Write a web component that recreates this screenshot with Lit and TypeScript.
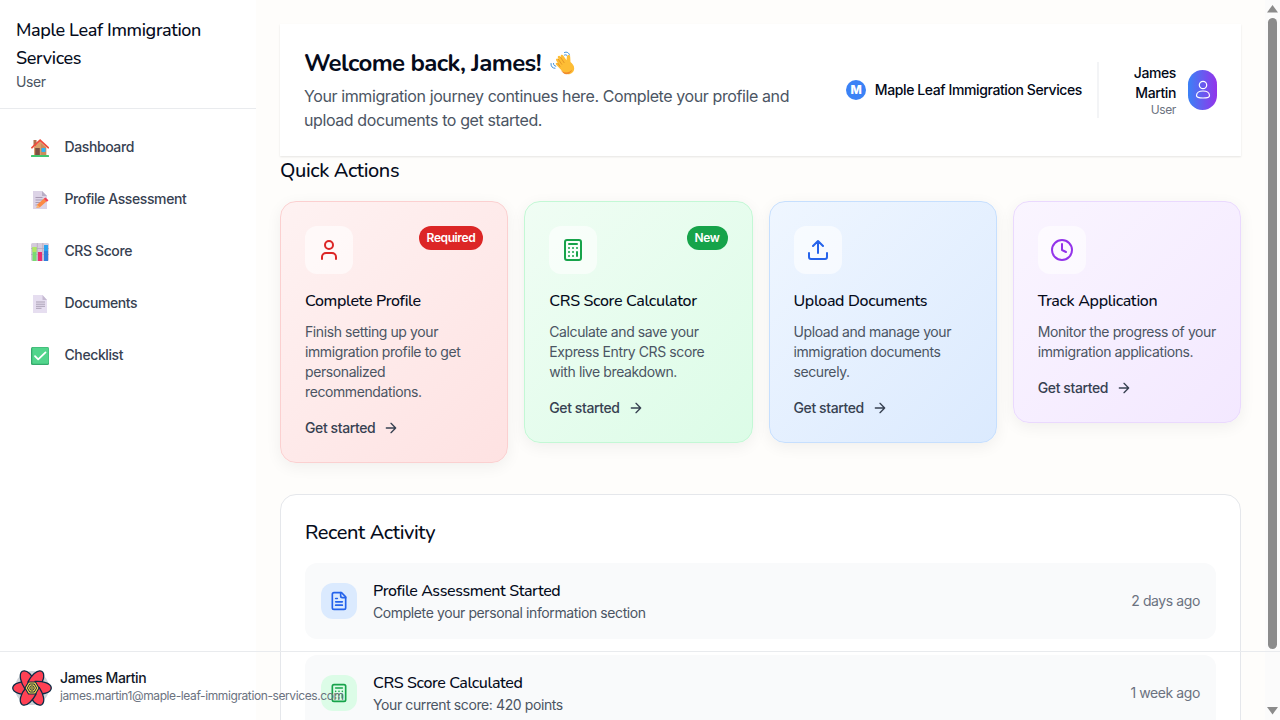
import { LitElement, html, css, svg } from "lit";
import { customElement } from "lit/decorators.js";

const lucide = (body: unknown, size: number) => html`<svg width=${size} height=${size} viewBox="0 0 24 24" fill="none" stroke="currentColor" stroke-width="2" stroke-linecap="round" stroke-linejoin="round">${body}</svg>`;

const icons = {
  user: svg`<path d="M19 21v-2a4 4 0 0 0-4-4H9a4 4 0 0 0-4 4v2"/><circle cx="12" cy="7" r="4"/>`,
  calculator: svg`<rect width="16" height="20" x="4" y="2" rx="2"/><path d="M8 6h8M16 14v4M16 10h.01M12 10h.01M8 10h.01M12 14h.01M8 14h.01M12 18h.01M8 18h.01"/>`,
  upload: svg`<path d="M21 15v4a2 2 0 0 1-2 2H5a2 2 0 0 1-2-2v-4M17 8l-5-5-5 5M12 3v12"/>`,
  clock: svg`<circle cx="12" cy="12" r="10"/><path d="M12 6v6l4 2"/>`,
  file: svg`<path d="M15 2H6a2 2 0 0 0-2 2v16a2 2 0 0 0 2 2h12a2 2 0 0 0 2-2V7Z"/><path d="M14 2v4a2 2 0 0 0 2 2h4M10 9H8M16 13H8M16 17H8"/>`,
  arrow: svg`<path d="M5 12h14M12 5l7 7-7 7"/>`,
};

const emoji = (body: unknown) => html`<svg width="18" height="18" viewBox="0 0 18 18">${body}</svg>`;

const nav = [
  { label: "Dashboard", icon: emoji(svg`
    <rect x="2.5" y="1" width="3" height="6" fill="#b0704f"/>
    <path d="M3 8 9 2.6 15.2 8v8.5H3Z" fill="#d9a06b"/>
    <path d="M10 4.5 15.2 9v7.500H10Z" fill="#c98d5d"/>
    <rect x="4.200" y="9" width="4.600" height="7.500" fill="#7d4f42"/>
    <rect x="10.500" y="9" width="4" height="4" fill="#2fb4f3"/>
    <path d="M1 8.700 9.100 1.300 17.200 8.700" fill="none" stroke="#ee4c3c" stroke-width="1.800" stroke-linecap="round"/>
    <rect x="0" y="16" width="18" height="2" rx=".6" fill="#43c66f"/>`) },
  { label: "Profile Assessment", icon: emoji(svg`
    <path d="M2 0h9l5 5v13H2Z" fill="#dcd3e6"/><path d="M11 0v5h5Z" fill="#b8aec6"/>
    <path d="M4.500 6.500h7M4.500 9h9M4.500 11.500h7M4.500 14h3" stroke="#a99bb4" stroke-width="1"/>
    <path d="m5.500 17 .8-3.500 7-6.200 2.700 2.700-7 6.200Z" fill="#fb8a45"/>
    <path d="m12.800 7.800 1.700-1.300 3 2.700-1.500 1.500Z" fill="#f3405a"/>
    <path d="m5.500 17 .8-3.200 2.500 2.500Z" fill="#f5b97c"/>`) },
  { label: "CRS Score", icon: emoji(svg`
    <rect width="18" height="18" rx="1.500" fill="#d5cbdc"/>
    <path d="M6.300 0v18M11.800 0v18M0 5.500h18M0 11.500h18" stroke="#b5aabd" stroke-width=".8"/>
    <rect x="1.500" y="4" width="4" height="14" fill="#79dc72"/><rect x="1.500" y="4" width="4" height="5" fill="#b2e764"/>
    <rect x="7" y="9" width="4" height="9" fill="#ea2e70"/>
    <rect x="13" y="2" width="4" height="16" fill="#2f7fdc"/><rect x="13" y="2" width="4" height="6" fill="#2ba3ee"/>`) },
  { label: "Documents", icon: emoji(svg`
    <path d="M2 0h9.500l4.500 5v13H2Z" fill="#e6def0"/><path d="M11.500 0v5H16Z" fill="#c6bad2"/>
    <path d="M5 7h9M5 9.200h9M5 11.300h9M5 13.300h5.500" stroke="#aaa0b4" stroke-width="1"/>`) },
  { label: "Checklist", icon: emoji(svg`
    <rect width="18" height="18" rx="1.500" fill="#35a96c"/><rect x="1.300" y=".4" width="16.300" height="16.300" rx="1" fill="#52d58c"/>
    <path d="m4 9.200 3.200 3.200 7.300-7" fill="none" stroke="#fff" stroke-width="1.800" stroke-linecap="round" stroke-linejoin="round"/>`) },
];

const actions = [
  { tone: "red", icon: icons.user, badge: "Required", title: "Complete Profile", text: "Finish setting up your immigration profile to get personalized recommendations." },
  { tone: "green", icon: icons.calculator, badge: "New", title: "CRS Score Calculator", text: "Calculate and save your Express Entry CRS score with live breakdown." },
  { tone: "blue", icon: icons.upload, badge: "", title: "Upload Documents", text: "Upload and manage your immigration documents securely." },
  { tone: "purple", icon: icons.clock, badge: "", title: "Track Application", text: "Monitor the progress of your immigration applications." },
];

const activity = [
  { tone: "blue", icon: icons.file, title: "Profile Assessment Started", text: "Complete your personal information section", when: "2 days ago" },
  { tone: "green", icon: icons.calculator, title: "CRS Score Calculated", text: "Your current score: 420 points", when: "1 week ago" },
];

const wave = html`<svg class="wave" width="25" height="24" viewBox="0 0 25 24">
  <g fill="none" stroke="#3a8fdb" stroke-width="1" stroke-linecap="round">
    <path d="M14.500 1.500c2.500-1 4.500.2 5 2.500M14.500 4c1.500-.6 2.500 0 3 1.500M1 12.500c-.3 2.800 1.300 4.700 4 4.800M3.500 12.500c0 1.500.8 2.500 2.300 2.700"/></g>
  <path d="M8 12.500 6.200 9.500c-.9-1.700 1-2.800 2-1.500l.5.600-.8-1.900c-.7-1.800 1.500-2.700 2.400-1.200l.7 1-.3-1c-.5-1.900 1.800-2.500 2.600-1l3.200 4.700.4-3.600c.3-2.200 3.300-2 3.300.2l.3 5.200c1.800 2 3.700 3 3.700 6.200 0 3.500-2.700 6-6 6-3.500 0-5.500-2-7.500-4.700L6 13.500c-1-1.500 1-2.500 2-1Z" fill="#fdbd35"/>
  <path d="m8.300 8.300 3.500 5M10.700 6.500l3.400 5.200M8 12.500l2 2.800" fill="none" stroke="#df8c22" stroke-width=".8" stroke-linecap="round"/>
  <path d="M10.800 19c2.500 3 8 3.500 11.500-.5-1 3.200-3.500 4.700-5.900 4.700-2.400 0-4-1.700-5.600-4.200Z" fill="#f08b2d"/></svg>`;

const flower = html`<svg width="40" height="40" viewBox="-20 -20 40 40">
  <circle r="17" fill="#cfd3d8"/>
  ${[0, 60, 120, 180, 240, 300].map((a) => svg`<path transform="rotate(${a})" d="M-3 6.500C-10 7-19 5-19.300 0-19-5-10-7-4-5.500Z" fill="#ff4154" stroke="#0b2b45" stroke-width="1.300" stroke-linejoin="round"/>`)}
  <path d="M-7 0-3.500-6h7L7 0 3.500 6h-7Z" fill="#ffd94c" stroke="#0b2b45" stroke-width="1.100"/>
  <path d="M-4.600 0-2.300-4h4.600L4.600 0 2.300 4h-4.600Z" fill="#ffd94c" stroke="#0b2b45"/>
  <circle r="2.200" fill="#ffd94c" stroke="#0b2b45"/><circle r=".8" fill="#0b2b45"/></svg>`;

@customElement("app-root")
export class AppRoot extends LitElement {
  static styles = css`
    :host { display: block; height: 720px; overflow: hidden; position: relative; background: #fefdfb; color: #020817;
      font: 400 14px/20px Inter, sans-serif; letter-spacing: -0.4px; }
    * { box-sizing: border-box; }
    h1, h2, h3, p { margin: 0; }
    svg { display: block; flex: none; }
    .heading { font-family: Nunito, Lato, sans-serif; font-weight: 500; color: #050b1b; letter-spacing: -0.4px; }
    .layout { display: grid; grid-template-columns: 256px minmax(0, 1fr) 15px; height: 720px; }
    .side { background: #fff; }
    .brand { padding: 16px; border-bottom: 1px solid #e9ebee; color: #4b5563; }
    .brand h2 { font-size: 18px; line-height: 28px; letter-spacing: -0.36px; }
    nav { display: flex; flex-direction: column; gap: 8px; padding: 16px; }
    .link { display: flex; align-items: center; gap: 12.5px; height: 44px; padding: 0 12px; font-weight: 500; color: #374151; }
    .link .glyph { width: 24px; display: flex; justify-content: center; padding-top: 2px; }
    main { padding: 24px 24px 0; overflow: hidden; }
    .top { display: flex; align-items: center; justify-content: space-between; height: 132px; margin-bottom: .5px; padding: 24px; background: #fff; box-shadow: 0 1px 2px rgba(0,0,0,.1); }
    .hello { width: 500px; }
    .hello h1 { display: flex; align-items: center; gap: 9px; font-size: 24px; line-height: 32px; font-weight: 700; margin: -1px 0 5px; letter-spacing: -0.6px; }
    .hello p { font-size: 16px; line-height: 24px; color: #4b5563; }
    .right { display: flex; align-items: center; }
    .org { display: flex; align-items: center; gap: 9px; font-weight: 500; }
    .logo { width: 20px; height: 20px; border-radius: 50%; background: #3b82f6; color: #fff; font-weight: 800; font-size: 12px; text-align: center; }
    .me { display: flex; align-items: center; gap: 12px; margin-left: 15px; border-left: 2px solid #f3f4f6; }
    .who { width: 77px; padding: 1px 0 0 30px; text-align: right; font-weight: 500; }
    .who small { display: block; font-size: 12px; line-height: 16px; margin-top: -1px; font-weight: 400; color: #6b7280; }
    .pill { width: 29px; height: 40px; border-radius: 99px; background: linear-gradient(90deg, #3b82f6, #9333ea); display: grid; place-items: center; }
    .section { font-size: 20px; line-height: 28px; margin-bottom: 16px; }
    .cards { display: grid; grid-template-columns: repeat(4, minmax(0, 1fr)); gap: 16px; align-items: start; margin-bottom: 31.5px; }
    .card { border: 1px solid; border-radius: 16px; padding: 24px; box-shadow: 0 4px 16px rgba(0,0,0,.06); }
    .card.red { background: linear-gradient(135deg, #fef2f2, #fee2e2); border-color: #fbd0d0; }
    .card.green { background: linear-gradient(135deg, #f0fdf4, #dcfce7); border-color: #c3f8d5; }
    .card.blue { background: linear-gradient(135deg, #eff6ff, #dbeafe); border-color: #c6dffe; }
    .card.purple { background: linear-gradient(135deg, #faf5ff, #f3e8ff); border-color: #ead9fe; }
    .row { display: flex; justify-content: space-between; align-items: flex-start; margin-bottom: 15px; }
    .tile { width: 48px; height: 48px; border-radius: 12px; background: rgba(255,255,255,.6); display: grid; place-items: center; }
    .red .tile { color: #dc2626; } .green .tile { color: #16a34a; } .blue .tile { color: #2563eb; } .purple .tile { color: #9333ea; }
    .badge { padding: 4px 8px; border-radius: 99px; font-size: 12px; line-height: 16px; font-weight: 600; color: #fff; }
    .red .badge { background: #dc2626; } .green .badge { background: #16a34a; }
    .card h3 { font-size: 16px; line-height: 24px; margin-bottom: 9px; letter-spacing: -0.34px; }
    .card p { color: #4b5563; margin-bottom: 16px; }
    .go { display: flex; align-items: center; gap: 8px; font-weight: 500; color: #374151; }
    .panel { background: #fff; border: 1px solid #e5e7eb; border-radius: 16px; padding: 24px; height: 400px; }
    .item { display: flex; align-items: center; gap: 16px; padding: 16px; border-radius: 12px; background: #f9fafb; margin-bottom: 16px; }
    .item .tile { width: 36px; height: 36px; }
    .item.blue .tile { background: #dbeafe; } .item.green .tile { background: #dcfce7; }
    .item .body { flex: 1; color: #4b5563; }
    .item h3 { font-size: 16px; line-height: 24px; }
    .item time { color: #6b7280; }
    .bar { background: #fbfbfb; display: flex; flex-direction: column; align-items: center; justify-content: space-between; padding: 5px 0 5px; }
    .thumb { width: 9px; height: 631px; border-radius: 5px; background: #8b8b8b; margin-bottom: 53px; }
    .foot { position: absolute; left: 0; right: 0; bottom: 0; height: 69px; border-top: 1px solid #e9ebee; padding: 4px 12px 0; display: flex; align-items: center; gap: 8px; }
    .foot div { padding-bottom: 4px; }
    .foot b { display: block; font-weight: 500; line-height: 20px; color: #111827; }
    .foot span { display: block; font-size: 12px; line-height: 16px; color: #6b7280; white-space: nowrap; }
  `;

  render() {
    return html`
      <div class="layout">
        <aside class="side">
          <div class="brand"><h2 class="heading">Maple Leaf Immigration Services</h2>User</div>
          <nav>${nav.map((n) => html`<div class="link"><span class="glyph">${n.icon}</span>${n.label}</div>`)}</nav>
        </aside>
        <main>
          <header class="top">
            <div class="hello">
              <h1 class="heading"><span class="greet">Welcome back, James!</span>${wave}</h1>
              <p>Your immigration journey continues here. Complete your profile and upload documents to get started.</p>
            </div>
            <div class="right">
              <div class="org"><span class="logo">M</span>Maple Leaf Immigration Services</div>
              <div class="me">
                <div class="who">James Martin<small>User</small></div>
                <div class="pill"><svg width="16" height="20" viewBox="0 0 16 20" fill="none" stroke="#fff" stroke-width="1.200"><circle cx="8" cy="5" r="3.700"/><path d="M1.500 15.700c0-2.700 2.600-4.700 6.500-4.700s6.500 2 6.500 4.700c0 1.300-2 2.300-6.500 2.300s-6.500-1-6.500-2.300Z"/></svg></div>
              </div>
            </div>
          </header>
          <h2 class="heading section">Quick Actions</h2>
          <div class="cards">${actions.map((a) => html`
            <article class="card ${a.tone}">
              <div class="row"><span class="tile">${lucide(a.icon, 24)}</span>${a.badge ? html`<span class="badge">${a.badge}</span>` : ""}</div>
              <h3 class="heading">${a.title}</h3>
              <p>${a.text}</p>
              <div class="go">Get started ${lucide(icons.arrow, 16)}</div>
            </article>`)}
          </div>
          <section class="panel">
            <h2 class="heading section">Recent Activity</h2>
            ${activity.map((a) => html`
              <div class="item ${a.tone}"><span class="tile">${lucide(a.icon, 20)}</span>
                <div class="body"><h3 class="heading">${a.title}</h3>${a.text}</div>
                <time>${a.when}</time></div>`)}
          </section>
        </main>
        <div class="bar">
          <svg width="11" height="8" viewBox="0 0 11 8"><path d="M5.500 0 11 7.500H0Z" fill="#8b8b8b"/></svg>
          <div class="thumb"></div>
          <svg width="11" height="8" viewBox="0 0 11 8"><path d="M0 0h11L5.500 7.500Z" fill="#8b8b8b"/></svg>
        </div>
      </div>
      <div class="foot">${flower}<div><b>James Martin</b><span>james.martin1@maple-leaf-immigration-services.com</span></div></div>`;
  }
}
